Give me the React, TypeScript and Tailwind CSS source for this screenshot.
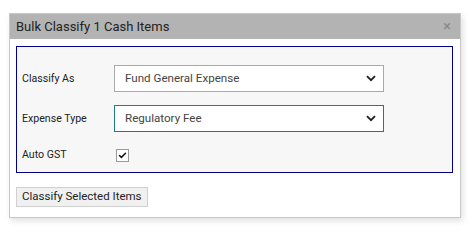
import { Check } from "lucide-react";

function Chevron() {
  return (
    <svg width="10" height="7" viewBox="0 0 10 7" className="shrink-0">
      <path d="M1 1.2 L5 5.2 L9 1.2" fill="none" stroke="#222" strokeWidth="1.9" />
    </svg>
  );
}

function SelectBox({ value, focused }: { value: string; focused?: boolean }) {
  return (
    <div
      className={
        focused
          ? "flex h-[27px] w-[270px] items-center justify-between border border-[#1f7a8c] bg-white pl-[10px] pr-[7px]"
          : "flex h-[27px] w-[270px] items-center justify-between border border-[#a9a9a9] bg-white pl-[10px] pr-[7px]"
      }
    >
      <span className="text-[11.6px] text-[#444]">{value}</span>
      <Chevron />
    </div>
  );
}

export default function App() {
  return (
    <div className="h-[243px] w-[472px] bg-white pl-[9px] pt-[13px] font-['Roboto',sans-serif]">
      <div className="w-[452px] border border-[#c8c8c8] bg-white shadow-[2px_3px_6px_rgba(0,0,0,0.12)]">
        <div className="flex h-[25px] items-center justify-between bg-[#b3b3b3] pl-[6px] pr-[9px]">
          <span className="text-[13px] text-[#222]">Bulk Classify 1 Cash Items</span>
          <span className="text-[15px] leading-none text-[#888]">×</span>
        </div>
        <div className="px-[6px] pb-[10px] pt-[7px]">
          <div className="flex w-[437px] flex-col gap-[13px] border border-[#000090] bg-[#f7f7f7] pb-[10px] pl-[5px] pt-[18px]">
            <div className="flex items-center">
              <span className="w-[92px] text-[10.6px] text-[#222]">Classify As</span>
              <SelectBox value="Fund General Expense" />
            </div>
            <div className="flex items-center">
              <span className="w-[92px] text-[10.6px] text-[#222]">Expense Type</span>
              <SelectBox value="Regulatory Fee" focused />
            </div>
            <div className="mt-[4px] flex h-[13px] items-center leading-none">
              <span className="w-[94px] text-[10.6px] text-[#222]">Auto GST</span>
              <div className="flex h-[13px] w-[13px] items-center justify-center border border-[#999] bg-white">
                <Check size={9} strokeWidth={4} color="#111" />
              </div>
            </div>
          </div>
          <button className="mt-[14px] h-[20px] border border-[#d0d0d0] bg-[#f0f0f0] px-[5px] text-[11.5px] text-[#222]">
            Classify Selected Items
          </button>
        </div>
      </div>
    </div>
  );
}
